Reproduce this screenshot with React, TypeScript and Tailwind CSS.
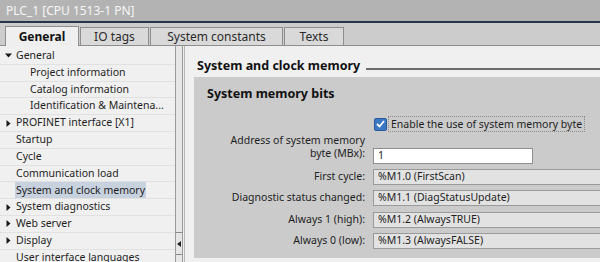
import { ReactNode } from "react";

type TreeItem = {
    label: string;
    level: 0 | 1;
    arrow?: "open" | "closed";
    selected?: boolean;
};

const TREE: TreeItem[] = [
    { label: "General", level: 0, arrow: "open" },
    { label: "Project information", level: 1 },
    { label: "Catalog information", level: 1 },
    { label: "Identification & Maintena...", level: 1 },
    { label: "PROFINET interface [X1]", level: 0, arrow: "closed" },
    { label: "Startup", level: 0 },
    { label: "Cycle", level: 0 },
    { label: "Communication load", level: 0 },
    { label: "System and clock memory", level: 0, selected: true },
    { label: "System diagnostics", level: 0, arrow: "closed" },
    { label: "Web server", level: 0, arrow: "closed" },
    { label: "Display", level: 0, arrow: "closed" },
    { label: "User interface languages", level: 0 },
];

const TABS = [
    { label: "General", width: "w-[74px]" },
    { label: "IO tags", width: "w-[69px]" },
    { label: "System constants", width: "w-[133px]" },
    { label: "Texts", width: "w-[60px]" },
];

const FIELDS = [
    { label: "First cycle:", value: "%M1.0 (FirstScan)" },
    { label: "Diagnostic status changed:", value: "%M1.1 (DiagStatusUpdate)" },
    { label: "Always 1 (high):", value: "%M1.2 (AlwaysTRUE)" },
    { label: "Always 0 (low):", value: "%M1.3 (AlwaysFALSE)" },
];

function Arrow({ kind }: { kind?: "open" | "closed" }) {
    if (!kind) return <span className="w-[11px] shrink-0" />;
    return (
        <span className="w-[11px] shrink-0 flex items-center">
            <svg width="7" height="7" viewBox="0 0 7 7">
                {kind === "open" ? (
                    <path d="M0 1.5 L7 1.5 L3.5 5.5 Z" fill="#1a1a1a" />
                ) : (
                    <path d="M1.5 0 L5.5 3.5 L1.5 7 Z" fill="#1a1a1a" />
                )}
            </svg>
        </span>
    );
}

function Row({ label, children }: { label: ReactNode; children: ReactNode }) {
    return (
        <div className="flex items-start">
            <div className="w-[179px] shrink-0 pr-[8px] text-right leading-[13px] whitespace-nowrap">{label}</div>
            {children}
        </div>
    );
}

export default function App() {
    return (
        <div className="w-[600px] h-[262px] overflow-hidden flex flex-col bg-[#f0f0f0] text-[10.5px] text-[#1e1e1e] font-['Noto_Sans',sans-serif]">
            {/* Title bar */}
            <div className="h-[21px] shrink-0 bg-[#b3b3b3] flex items-center px-[6px] text-[12px] text-[#f6f6f6]">
                PLC_1 [CPU 1513-1 PN]
            </div>
            <div className="h-[2px] shrink-0 bg-[#27354a]" />

            {/* Tabs */}
            <div className="h-[23px] shrink-0 bg-[#cccccc] flex items-end pl-[5px] border-b border-[#8e8e8e]">
                {TABS.map((t, i) =>
                    i === 0 ? (
                        <div
                            key={t.label}
                            className={`${t.width} h-[20px] -mb-px bg-[#efefef] border border-b-0 border-[#8e8e8e] flex items-center justify-center font-bold text-[12px] text-[#111]`}
                        >
                            {t.label}
                        </div>
                    ) : (
                        <div
                            key={t.label}
                            className={`${t.width} h-[18px] ml-[1px] bg-[#d9d9d9] border border-b-0 border-[#8e8e8e] flex items-center justify-center text-[12px] text-[#2a2a2a]`}
                        >
                            {t.label}
                        </div>
                    )
                )}
            </div>

            {/* Body */}
            <div className="flex-1 flex min-h-0">
                {/* Tree */}
                <div className="w-[175px] shrink-0 pt-[2px] flex flex-col">
                    {TREE.map((item) => (
                        <div
                            key={item.label}
                            className="h-[16.8px] shrink-0 flex items-center border-b border-[#e1e1e1] pl-[5px] whitespace-nowrap"
                        >
                            <Arrow kind={item.arrow} />
                            {item.level === 1 && <span className="w-[14px] shrink-0" />}
                            <span className={item.selected ? "bg-[#c8d2de] px-[1px] -ml-[1px] leading-[16px]" : ""}>
                                {item.label}
                            </span>
                        </div>
                    ))}
                </div>

                {/* Splitter / scrollbar */}
                <div className="w-[8px] shrink-0 bg-[#e6e6e6] border-x border-[#9a9a9a] flex flex-col">
                    <div className="flex-1" />
                    <div className="h-[22px] border-t border-[#8a8a8a] flex items-center justify-center">
                        <svg width="4" height="6" viewBox="0 0 4 6">
                            <path d="M4 0 L0 3 L4 6 Z" fill="#222" />
                        </svg>
                    </div>
                    <div className="h-[8px] border-t border-[#8a8a8a]" />
                </div>

                {/* Content */}
                <div className="flex-1 ml-[1px] border-l border-[#b8b8b8] pl-[9px] flex flex-col">
                    <div className="h-[28px] pt-[12px] flex items-center gap-[6px] pl-[3px]">
                        <span className="font-bold text-[12.5px] text-[#111] whitespace-nowrap">System and clock memory</span>
                        <div className="flex-1 h-[2px] bg-[#6b6b6b] mt-[6px]" />
                    </div>
                    <div className="mt-[3px] h-[181px] bg-[#cbcbcb] flex flex-col">
                        <div className="pl-[13px] pt-[8px] h-[37px] font-bold text-[12.5px] text-[#111]">System memory bits</div>
                        <div className="flex items-center h-[20px] pl-[180px]">
                            <span className="w-[13px] h-[13px] shrink-0 rounded-[2px] border border-[#2a5a9a] bg-[#3b78c4] flex items-center justify-center">
                                <svg width="9" height="8" viewBox="0 0 9 8">
                                    <path d="M1 4 L3.5 6.5 L8 1" stroke="#fff" strokeWidth="1.8" fill="none" />
                                </svg>
                            </span>
                            <span className="ml-[1px] px-[2px] border border-dotted border-[#8a8a8a] leading-[14px] whitespace-nowrap">
                                Enable the use of system memory byte
                            </span>
                        </div>
                        <Row
                            label={
                                <>
                                    Address of system memory
                                    <br />
                                    byte (MBx):
                                </>
                            }
                        >
                            <div className="w-[160px] h-[16px] mt-[14px] bg-white border border-[#8f8f8f] pl-[4px] flex items-center">
                                1
                            </div>
                        </Row>
                        <div className="flex flex-col gap-[5.3px] mt-[5px]">
                            {FIELDS.map((f) => (
                                <div key={f.label} className="flex items-center">
                                    <div className="w-[179px] shrink-0 pr-[8px] text-right whitespace-nowrap">{f.label}</div>
                                    <div className="flex-1 h-[16px] bg-[#e2e2e2] border border-r-0 border-[#9a9a9a] pl-[4px] flex items-center whitespace-nowrap">
                                        {f.value}
                                    </div>
                                </div>
                            ))}
                        </div>
                    </div>
                </div>
            </div>
        </div>
    );
}
